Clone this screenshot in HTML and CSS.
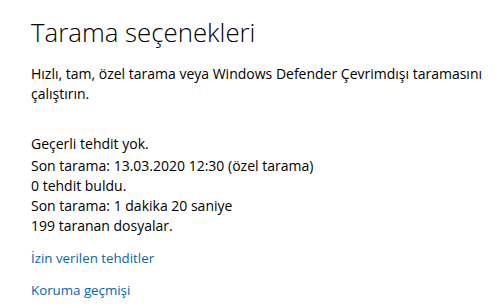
FILE: index.html
```html
<!DOCTYPE html>
<html lang="tr">
<head>
    <meta charset="utf-8">
    <title>Tarama seçenekleri</title>
    <link rel="stylesheet" href="styles.css">
</head>
<body>
    <div id="page">
        <h1 class="title">Tarama seçenekleri</h1>
        <p class="intro">Hızlı, tam, özel tarama veya Windows Defender Çevrimdışı taramasını çalıştırın.</p>

        <div class="status">
            <div class="status-head">Geçerli tehdit yok.</div>
            <div>Son tarama: 13.03.2020 12:30 (özel tarama)</div>
            <div>0 tehdit buldu.</div>
            <div>Son tarama: 1 dakika 20 saniye</div>
            <div>199 taranan dosyalar.</div>
        </div>

        <a class="link" href="#">İzin verilen tehditler</a>
        <a class="link" href="#">Koruma geçmişi</a>
    </div>
</body>
</html>
```

FILE: styles.css
```css
html,body{
    margin: 0;
    background-color: white;
}

#page{
    padding: 14px 0 0 31px;
    font-family: "Open Sans", "Noto Sans", sans-serif;
    font-size: 14px;
    color: black;
}

#page .title{
    margin: 0;
    font-weight: 300;
    font-size: 25.8px;
    line-height: 36px;
}

#page .intro{
    width: 470px;
    margin: 14px 0 0 0;
    line-height: 20px;
}

#page .status{
    margin-top: 30px;
    line-height: 20px;
}
#page .status .status-head{
    margin-bottom: 2px;
}

#page .link{
    display: block;
    color: #0067b8;
    text-decoration: none;
    font-size: 13.3px;
    line-height: 20px;
}
#page .status + .link{
    margin-top: 12px;
}
#page .link + .link{
    margin-top: 12px;
}
```
